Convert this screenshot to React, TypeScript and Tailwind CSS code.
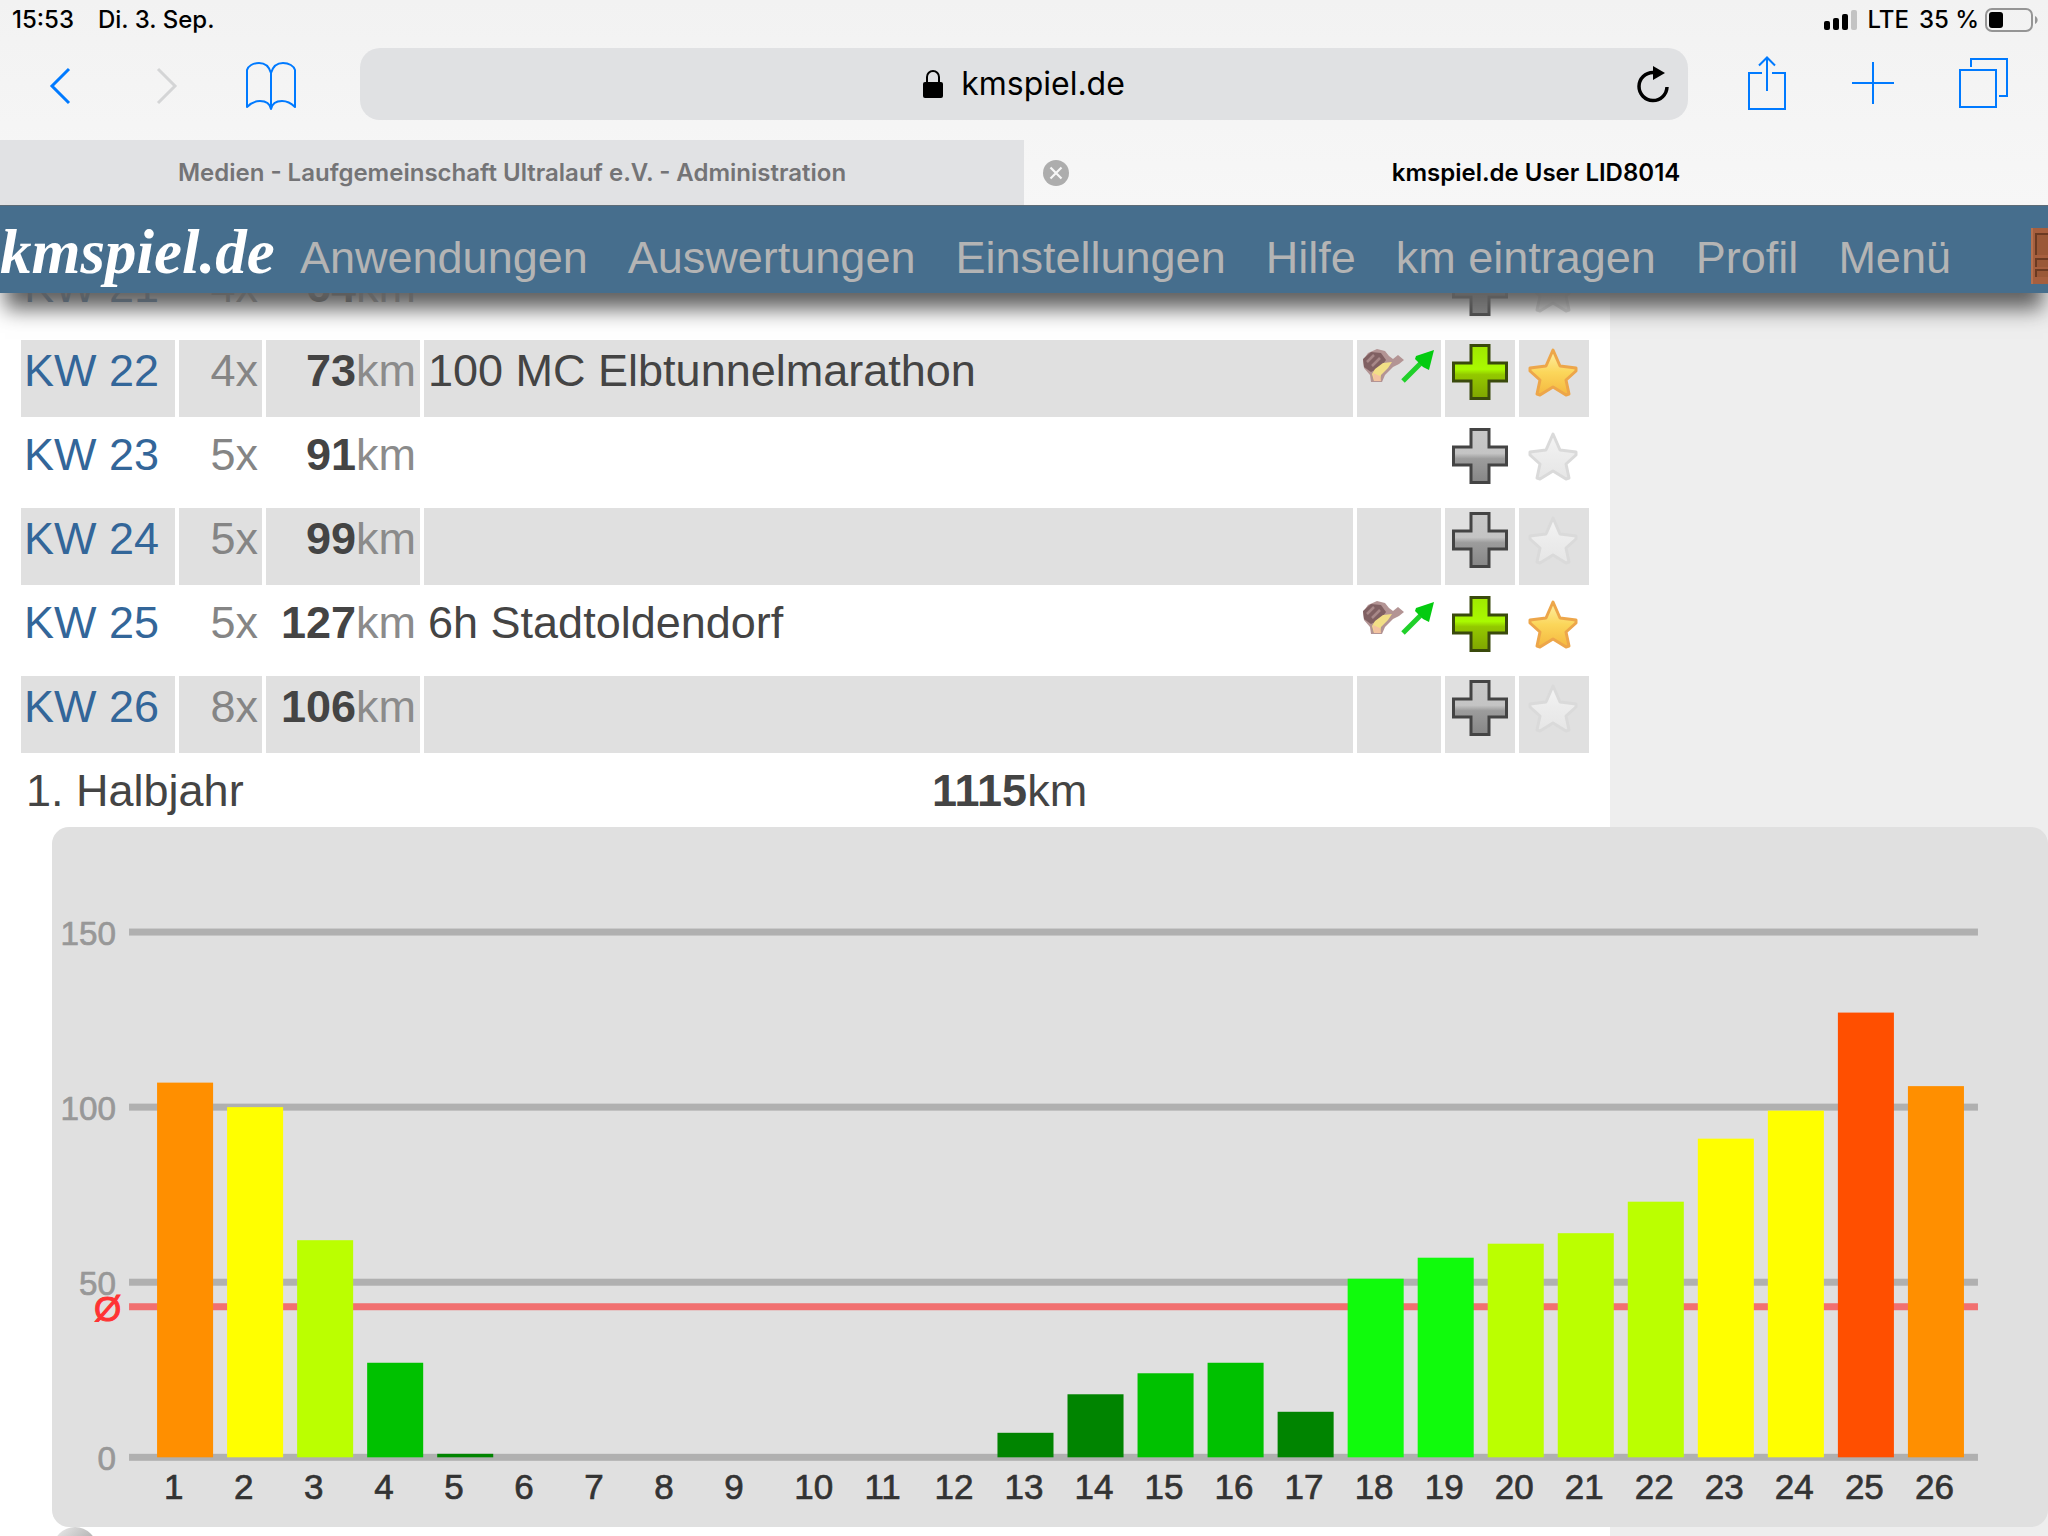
import { ReactNode } from "react";

const UI_FONT = "font-['Inter','Roboto',sans-serif]";
const PAGE_FONT = "font-['Liberation_Sans',Arial,sans-serif]";

interface Week {
  week: number;
  runs: number;
  km: number;
  note?: string;
  race?: boolean;
}

const weeks: Week[] = [
  { week: 21, runs: 4, km: 64 },
  { week: 22, runs: 4, km: 73, note: "100 MC Elbtunnelmarathon", race: true },
  { week: 23, runs: 5, km: 91 },
  { week: 24, runs: 5, km: 99 },
  { week: 25, runs: 5, km: 127, note: "6h Stadtoldendorf", race: true },
  { week: 26, runs: 8, km: 106 },
];

const kmPerWeek = [
  107, 100, 62, 27, 1, 0, 0, 0, 0, 0, 0, 0, 7, 18, 24, 27, 13, 51, 57, 61, 64, 73, 91, 99, 127, 106,
];

const navItems = ["Anwendungen", "Auswertungen", "Einstellungen", "Hilfe", "km eintragen", "Profil", "Menü"];

function barColor(km: number) {
  if (km > 120) return "#ff4f00";
  if (km > 100) return "#ff8f00";
  if (km > 80) return "#ffff00";
  if (km > 60) return "#bbff00";
  if (km > 40) return "#10fb0c";
  if (km > 20) return "#00c100";
  return "#008400";
}

function StatusBar() {
  return (
    <div className="flex h-10 items-center justify-between pr-[10px] pl-3 text-2xl font-medium text-black">
      <div className="flex gap-6">
        <span>15:53</span>
        <span>Di. 3. Sep.</span>
      </div>
      <div className="flex items-center">
        <svg width="33" height="20" viewBox="0 0 33 20" className="mr-2.5">
          <rect x="0" y="11" width="6" height="9" rx="2" />
          <rect x="9" y="8" width="6" height="12" rx="2" />
          <rect x="18" y="4" width="6" height="16" rx="2" />
          <rect x="27" y="0" width="6" height="20" rx="2" fill="#c3c3c3" />
        </svg>
        <span className="mr-2.5">LTE</span>
        <span className="mr-1.5">35 %</span>
        <svg width="53" height="24" viewBox="0 0 53 24">
          <rect x="1" y="1" width="46" height="22" rx="6" fill="none" stroke="#959595" strokeWidth="2" />
          <rect x="4" y="4" width="14" height="16" rx="3" />
          <path d="M50 8c3.500 1.500 3.500 6.500 0 8z" fill="#959595" />
        </svg>
      </div>
    </div>
  );
}

function ToolButton({ label, children }: { label: string; children: ReactNode }) {
  return (
    <button type="button" aria-label={label} className="flex h-[60px] shrink-0 items-center justify-center text-[#007aff]">
      {children}
    </button>
  );
}

function Toolbar() {
  return (
    <div className="flex h-[100px] items-start pt-2 pr-10 pl-12">
      <div className="flex w-[312px] shrink-0 pt-2">
        <ToolButton label="Zurück">
          <svg width="24" height="50" viewBox="0 0 24 50" fill="none" stroke="currentColor" strokeWidth="3">
            <path d="M21 8L4 25l17 17" />
          </svg>
        </ToolButton>
        <div className="w-[83px]" />
        <ToolButton label="Vorwärts">
          <svg width="24" height="50" viewBox="0 0 24 50" fill="none" stroke="#d4d5d6" strokeWidth="3">
            <path d="M3 8l17 17L3 42" />
          </svg>
        </ToolButton>
        <div className="w-[66px]" />
        <ToolButton label="Lesezeichen">
          <svg width="52" height="50" viewBox="0 0 52 50" fill="none" stroke="currentColor" strokeWidth="2" strokeLinejoin="round">
            <path d="M26 12C24 5 19 2 14 2 8 2 3 5 2 9v37c4-4 8-6 13-6 6 0 10 3 11 8 1-5 5-8 11-8 5 0 9 2 13 6V9C49 5 44 2 38 2c-5 0-10 3-12 10zv36" />
          </svg>
        </ToolButton>
      </div>
      <div className="relative flex h-[72px] min-w-0 flex-1 items-center justify-center rounded-[20px] bg-[#e0e1e3]">
        <svg width="20" height="28" viewBox="0 0 20 28" className="mr-[18px]">
          <rect x="0" y="12" width="20" height="16" rx="2" />
          <path d="M4 13V7a6 6 0 0 1 12 0v6" fill="none" stroke="black" strokeWidth="2" />
        </svg>
        <span className="text-[32px] text-black">kmspiel.de</span>
        <button type="button" aria-label="Neu laden" className="absolute right-[18px]">
          <svg width="34" height="38" viewBox="0 0 34 38">
            <path d="M17 7.500A14 14 0 1 0 31 22" fill="none" stroke="black" strokeWidth="3.500" />
            <path d="M17 1v14l12-7z" />
          </svg>
        </button>
      </div>
      <div className="flex w-80 shrink-0 justify-between pt-[5px] pl-[60px]">
        <ToolButton label="Teilen">
          <svg width="38" height="54" viewBox="0 0 38 54" fill="none" stroke="currentColor" strokeWidth="2">
            <path d="M14 17H1v36h36V17H24M19 35V2M11 9.500L19 1.500l8 8" />
          </svg>
        </ToolButton>
        <ToolButton label="Neuer Tab">
          <svg width="42" height="42" viewBox="0 0 42 42" fill="none" stroke="currentColor" strokeWidth="2">
            <path d="M21 0v42M0 21h42" />
          </svg>
        </ToolButton>
        <ToolButton label="Tabs">
          <svg width="49" height="50" viewBox="0 0 49 50" fill="none" stroke="currentColor" strokeWidth="2">
            <path d="M1 12h36v37H1zM12 9V1h36v37h-8" />
          </svg>
        </ToolButton>
      </div>
    </div>
  );
}

function TabBar() {
  return (
    <div className="grid h-[65px] grid-cols-2 text-center text-2xl leading-[65px] font-semibold">
      <button type="button" className="bg-[#e1e2e4] text-[#747476]">
        Medien - Laufgemeinschaft Ultralauf e.V. - Administration
      </button>
      <div className="relative">
        <button type="button" aria-label="Tab schließen" className="absolute top-5 left-[19px]">
          <svg width="26" height="26" viewBox="0 0 26 26">
            <circle cx="13" cy="13" r="13" fill="#adadad" />
            <path d="M7.500 7.500l11 11M18.500 7.500l-11 11" stroke="#f7f7f7" strokeWidth="2.200" />
          </svg>
        </button>
        <span className="text-black">kmspiel.de User LID8014</span>
      </div>
    </div>
  );
}

function SiteNav() {
  return (
    <nav className="absolute inset-x-0 top-0 z-10 flex h-[88px] items-center border-t border-[#5d6b76] bg-[#466e8d] whitespace-nowrap shadow-[0_21px_20px_-5px_#606060]">
      <a href="#" className="w-[300px] shrink-0 pt-1 font-['Liberation_Serif',serif] text-[63px] leading-[80px] font-bold text-white italic">
        kmspiel.de
      </a>
      <div className="flex gap-10 pt-4 text-[45px] leading-[60px] text-[#b4b4b4]">
        {navItems.map((item) => (
          <a key={item} href="#">
            {item}
          </a>
        ))}
      </div>
      <div className="ml-auto w-[17px] shrink-0 overflow-hidden pt-3">
        <svg width="56" height="56" viewBox="0 0 56 56">
          <rect width="56" height="56" fill="#a65f3e" />
          <path d="M5 6h51v21H5zM5 31h51v8H5zM5 42h51v7H5z" fill="#9a5837" />
          <path d="M5 27V6h51M5 39v-8h51M5 49v-7h51" fill="none" stroke="#6b3a22" strokeWidth="2" />
          <path d="M1 0v56" stroke="#b5714f" strokeWidth="2" />
        </svg>
      </div>
    </nav>
  );
}

function RaceIcon() {
  return (
    <svg width="74" height="38" viewBox="0 0 74 38">
      <path d="M0 12l5-7 9-4 8 2 4 5 4 3 5-4 6 5-5 4-6 3-8 8-3 7H8L7 27 1 20z" fill="#b39494" />
      <path d="M0 11l8-7 10 1 5 7-5 7-10 5-7-5z" fill="#806062" />
      <path d="M4 14l7-7M9 18l8-8" stroke="#a78888" strokeWidth="2.500" />
      <path d="M12 21l8-6 9-1-4 6-7 7-1 6h-6l-2-7z" fill="#f2df86" />
      <path d="M10 25l7 3 1 5h-7z" fill="#f3c3a0" />
      <path d="M40 33L58 15" stroke="#20d02a" strokeWidth="5" />
      <path d="M71 2l-5 20-6-3-8-8 1-3z" fill="#04cb10" />
    </svg>
  );
}

function PlusIcon({ active }: { active?: boolean }) {
  const id = active ? "plus-on" : "plus-off";
  return (
    <svg width="56" height="56" viewBox="0 0 56 56">
      <defs>
        <linearGradient id={id} x1="0" y1="0" x2="0" y2="1">
          <stop offset="0" stopColor={active ? "#a0e800" : "#c8c8c8"} />
          <stop offset="0.450" stopColor={active ? "#a9fa00" : "#c4c4c4"} />
          <stop offset="0.550" stopColor={active ? "#93c800" : "#9c9c9c"} />
          <stop offset="1" stopColor={active ? "#7fa500" : "#868686"} />
        </linearGradient>
      </defs>
      <path
        d="M19 1.500h18V19h17.500v18H37v17.500H19V37H1.500V19H19z"
        fill={`url(#${id})`}
        stroke={active ? "#3a4a0c" : "#444444"}
        strokeWidth="3"
      />
    </svg>
  );
}

function StarIcon({ active }: { active?: boolean }) {
  const id = active ? "star-on" : "star-off";
  return (
    <svg width="52" height="52" viewBox="0 0 52 52">
      <defs>
        <linearGradient id={id} x1="0" y1="0" x2="0" y2="1">
          <stop offset="0" stopColor={active ? "#fff0a8" : "#f4f4f4"} />
          <stop offset="0.500" stopColor={active ? "#fbd65a" : "#ececec"} />
          <stop offset="1" stopColor={active ? "#f5b840" : "#e6e6e6"} />
        </linearGradient>
      </defs>
      <path
        d="M26 4l7 16 16 2v3L39 34l3 14-3 1-13-8-13 8-3-1 3-14L3 25v-3l16-2z"
        fill={`url(#${id})`}
        stroke={active ? "#eda64a" : "#dadada"}
        strokeWidth="3"
        strokeLinejoin="round"
      />
    </svg>
  );
}

function WeekRow({ week, runs, km, note, race }: Week) {
  return (
    <tr className="h-[77px] align-top leading-[62px] even:*:bg-[#e0e0e0]">
      <td className="pl-[3px]">
        <a href="#" className="text-[#336699]">
          KW {week}
        </a>
      </td>
      <td className="pr-1 text-right text-[#858585]">{runs}x</td>
      <td className="pr-1 text-right text-[#8b8b8b]">
        <b className="text-[#444444]">{km}</b>km
      </td>
      <td className="pl-1">{note}</td>
      <td>
        {race && (
          <div className="pt-2 pl-1.5">
            <RaceIcon />
          </div>
        )}
      </td>
      <td>
        <button type="button" aria-label="Eintrag hinzufügen" className="block pt-1 pl-[7px]">
          <PlusIcon active={race} />
        </button>
      </td>
      <td>
        <button type="button" aria-label="Favorit" className="block pt-1.5 pl-2">
          <StarIcon active={race} />
        </button>
      </td>
    </tr>
  );
}

function HalfYearChart() {
  return (
    <svg viewBox="0 0 570 200" className="block w-full rounded-[17px] bg-[#e0e0e0]" fontSize="10">
      {[150, 100, 50, 0].map((km) => (
        <g key={km}>
          <rect x="22" y={179 - km} width="528" height="2" fill="#b0b0b0" />
          <text x="18.300" y={183.7 - km} textAnchor="end" fontSize="9.500" fill="#989898" stroke="#989898" strokeWidth="0.200">
            {km}
          </text>
        </g>
      ))}
      <rect x="22" y="136" width="528" height="2" fill="#f17070" />
      <text x="12" y="141" fill="#ff3333" stroke="#ff3333" strokeWidth="0.300">
        Ø
      </text>
      {kmPerWeek.map((km, i) => (
        <g key={i}>
          <rect x={30 + i * 20} y={180 - km} width="16" height={km} fill={barColor(km)} />
          <text x={32 + i * 20} y="192" fill="#333333" stroke="#333333" strokeWidth="0.200">
            {i + 1}
          </text>
        </g>
      ))}
    </svg>
  );
}

export default function App() {
  return (
    <div className={`flex h-screen flex-col overflow-hidden bg-[#eeeeee] ${PAGE_FONT}`}>
      <header className={`shrink-0 bg-linear-to-b from-[#f2f2f2] to-[#f7f7f7] ${UI_FONT}`}>
        <StatusBar />
        <Toolbar />
        <TabBar />
      </header>
      <div className="relative flex-1">
        <SiteNav />
        <main className="h-full w-[1610px] max-w-full bg-white pt-11 text-[45px] text-[#444444]">
          <table className="ml-[17px] w-[calc(100%-34px)] table-fixed border-separate border-spacing-x-1 border-spacing-y-[7px]">
            <colgroup>
              <col className="w-[154px]" />
              <col className="w-[83px]" />
              <col className="w-[154px]" />
              <col />
              <col className="w-[84px]" />
              <col className="w-[70px]" />
              <col className="w-[70px]" />
            </colgroup>
            <tbody>
              {weeks.map((row) => (
                <WeekRow key={row.week} {...row} />
              ))}
            </tbody>
          </table>
          <div className="grid grid-cols-[906px_1fr] pl-[26px] leading-[62px]">
            <span>1. Halbjahr</span>
            <span>
              <b>1115</b>km
            </span>
          </div>
          <div className="mt-[5px] ml-[52px] w-[calc(100vw-52px)]">
            <HalfYearChart />
            <div className="h-[9px] overflow-hidden">
              <div className="ml-px size-11 rounded-full bg-linear-to-br from-[#f0f0f0] to-[#8a8a8a]" />
            </div>
          </div>
        </main>
      </div>
    </div>
  );
}
